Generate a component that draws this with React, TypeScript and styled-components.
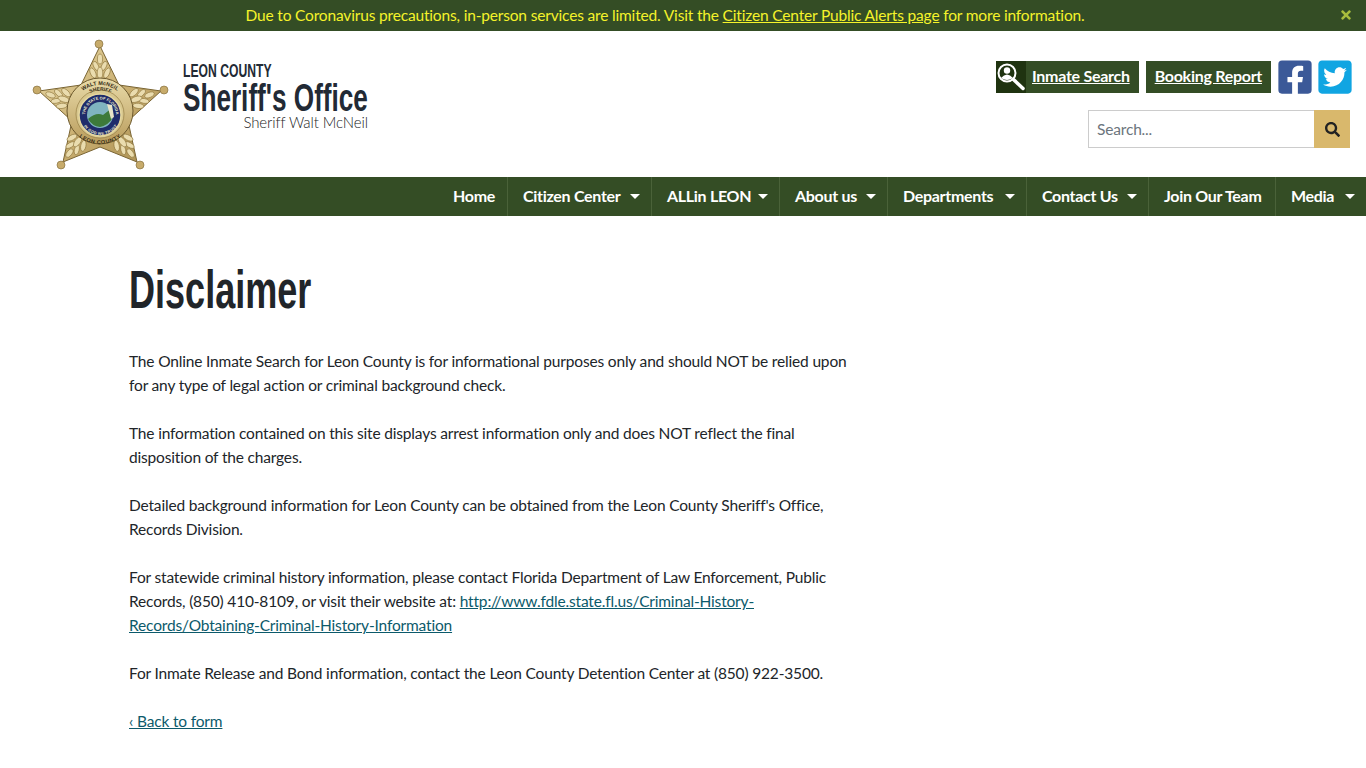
import { createGlobalStyle, styled } from "styled-components";
import { FaFacebookSquare, FaTwitterSquare, FaSearch, FaTimes } from "react-icons/fa";

const Global = createGlobalStyle`
  html, body { margin: 0; padding: 0; background: #fff; }
  body {
    font-family: "Lato", "Liberation Sans", sans-serif;
    color: #212529;
    font-size: 15.5px;
    letter-spacing: -0.17px;
    line-height: 24px;
  }
  * { box-sizing: border-box; }
`;

const AlertBar = styled.div`
  height: 31px;
  padding: 0 36px 2px 0;
  background: #344d25;
  color: #f5f32a;
  display: flex;
  align-items: center;
  justify-content: center;
  position: relative;
  a { color: inherit; }
`;

const AlertClose = styled.span`
  position: absolute;
  right: 13px;
  top: 8px;
  color: #a9bd3d;
  font-size: 14px;
  line-height: 14px;
`;

const Header = styled.header`
  height: 146px;
  display: flex;
  justify-content: space-between;
  padding: 8px 16px 0 31px;
`;

const Brand = styled.div`
  display: flex;
  gap: 14px;
`;

const BrandText = styled.div`
  width: 185px;
  padding-top: 22px;
  display: flex;
  flex-direction: column;
  color: #222a35;
  font-family: "Liberation Sans", sans-serif;
  letter-spacing: 0;
  white-space: nowrap;
`;

const County = styled.div`
  font-size: 19px;
  line-height: 20px;
  font-weight: 700;
  transform: scaleX(0.64);
  transform-origin: left;
`;

const Office = styled.div`
  font-size: 38px;
  line-height: 34px;
  font-weight: 700;
  transform: scaleX(0.688);
  transform-origin: left;
`;

const Sheriff = styled.div`
  font-family: "Lato", sans-serif;
  font-size: 15px;
  line-height: 14px;
  font-weight: 300;
  letter-spacing: -0.1px;
  color: #222;
  text-align: right;
`;

const Tools = styled.div`
  padding-top: 22px;
  display: flex;
  flex-direction: column;
  align-items: flex-end;
  gap: 17px;
`;

const ToolRow = styled.div`
  display: flex;
  gap: 7px;
  align-items: center;
  margin: -1px -1px 0 0;
`;

const ToolButton = styled.a`
  height: 32px;
  background: #344d25;
  color: #fff;
  font-size: 16px;
  font-weight: 700;
  letter-spacing: -0.28px;
  text-decoration: underline;
  display: flex;
  align-items: center;
  padding: 0 9px 1px;
`;

const IconBox = styled.span`
  width: 30px;
  height: 32px;
  margin: 1px 6px 0 -9px;
  background: #1f3310;
  display: flex;
`;

const Social = styled.span<{ $color: string }>`
  width: 33px;
  height: 33px;
  color: ${(p) => p.$color};
  display: flex;
  svg { width: 38px; height: 38px; margin: -2.5px; }
`;

const SearchForm = styled.div`
  display: flex;
  width: 262px;
  height: 38px;
`;

const SearchField = styled.input`
  flex: 1;
  min-width: 0;
  border: 1px solid #ccc;
  border-right: 0;
  padding: 0 8px;
  font: inherit;
  letter-spacing: inherit;
  &::placeholder { color: #6c757d; }
`;

const SearchButton = styled.button`
  width: 36px;
  border: 0;
  padding: 0;
  background: #d9b86c;
  color: #222;
  display: flex;
  align-items: center;
  justify-content: center;
`;

const Nav = styled.nav`
  height: 39px;
  background: #344d25;
  display: flex;
  justify-content: flex-end;
`;

const NavItem = styled.a<{ $w: number; $caret?: boolean }>`
  width: ${(p) => p.$w}px;
  padding: 0 0 2px 15px;
  color: #fff;
  font-size: 16px;
  font-weight: 700;
  letter-spacing: -0.3px;
  display: flex;
  align-items: center;
  border-right: 1px solid #4a6239;
  white-space: nowrap;
  &:last-child { border-right: 0; }
  ${(p) =>
    p.$caret &&
    `&::after {
      content: "";
      margin: 2px 11px 0 auto;
      border-top: 5px solid #fff;
      border-left: 5px solid transparent;
      border-right: 5px solid transparent;
    }`}
`;

const Main = styled.main`
  padding: 44px 0 0 129px;
  width: 855px;
`;

const Title = styled.h1`
  margin: 0 0 29px;
  font-family: "Liberation Sans", sans-serif;
  font-size: 53px;
  line-height: 60px;
  font-weight: 700;
  letter-spacing: 0;
  color: #212529;
  white-space: nowrap;
  transform: scaleX(0.68);
  transform-origin: left;
`;

const Para = styled.p`
  margin: 0 0 24px;
  a { color: #0c5a6b; }
`;

const arms = [0, 72, 144, 216, 288];
// leaf pairs on one arm, drawn pointing up and rotated round the badge centre
const leaves = [
  { y: 58, dx: 0, rx: 2.6, ry: 5 },
  { y: 65, dx: 4, rx: 2.4, ry: 5 },
  { y: 72, dx: 7, rx: 2.6, ry: 5.5 },
  { y: 72, dx: 0, rx: 2.8, ry: 6 },
];

const Badge = () => (
  <svg width="138" height="132" viewBox="30 38 138 132">
    <defs>
      <linearGradient id="gold" x1="0" y1="0" x2="1" y2="1">
        <stop offset="0" stopColor="#e8d8a4" />
        <stop offset="0.55" stopColor="#c9ae70" />
        <stop offset="1" stopColor="#a88d50" />
      </linearGradient>
      <linearGradient id="ring" x1="0" y1="0" x2="0" y2="1">
        <stop offset="0" stopColor="#e9dba9" />
        <stop offset="1" stopColor="#b99c5c" />
      </linearGradient>
      <path id="ringTop" d="M71 112a28 28 0 0 1 56 0" />
      <path id="ringMid" d="M77 112a22.500 22.500 0 0 1 45 0" />
      <path id="ringBottom" d="M68 108a31 31 0 0 0 62 0" />
      <path id="sealTop" d="M84 114a15.500 15.500 0 0 1 31 0" />
      <path id="sealBottom" d="M82 114a17.500 17.500 0 0 0 35 0" />
    </defs>
    <polygon
      points="99,45 118,84 160,90 127,120 136,161 99,146 62,161 71,120 38,90 80,84"
      fill="url(#gold)"
      stroke="#7a6534"
      strokeWidth="1"
    />
    {arms.map((a) => (
      <g key={a} transform={`rotate(${a} 99 110)`} fill="#eadcae" stroke="#8a7238" strokeWidth="0.6">
        {leaves.map((l) =>
          l.dx === 0 ? (
            <ellipse key={`${l.y}c`} cx="99" cy={l.y} rx={l.rx} ry={l.ry} />
          ) : (
            <g key={l.y}>
              <ellipse cx={99 - l.dx} cy={l.y} rx={l.rx} ry={l.ry} transform={`rotate(-25 ${99 - l.dx} ${l.y})`} />
              <ellipse cx={99 + l.dx} cy={l.y} rx={l.rx} ry={l.ry} transform={`rotate(25 ${99 + l.dx} ${l.y})`} />
            </g>
          )
        )}
      </g>
    ))}
    <g fill="#c7ab6b" stroke="#7a6534" strokeWidth="0.6">
      <circle cx="98" cy="43" r="4" />
      <circle cx="163" cy="89" r="4" />
      <circle cx="139" cy="164" r="4" />
      <circle cx="60" cy="164" r="4" />
      <circle cx="36" cy="89" r="4" />
    </g>
    <circle cx="99" cy="110" r="33" fill="url(#ring)" stroke="#6d5a2e" />
    <circle cx="99" cy="113" r="24" fill="#d8c78f" stroke="#8a7238" strokeWidth="0.6" />
    <g fill="#3a3018" fontFamily="Liberation Sans, sans-serif" fontWeight="700" letterSpacing="0">
      <text fontSize="5.500">
        <textPath href="#ringTop" startOffset="50%" textAnchor="middle">WALT McNEIL</textPath>
      </text>
      <text fontSize="5">
        <textPath href="#ringMid" startOffset="50%" textAnchor="middle">SHERIFF</textPath>
      </text>
      <text fontSize="5.500">
        <textPath href="#ringBottom" startOffset="50%" textAnchor="middle" dominantBaseline="hanging">LEON COUNTY</textPath>
      </text>
    </g>
    <circle cx="99" cy="114" r="21" fill="#1f2c6b" stroke="#e5d79f" strokeWidth="1.500" />
    <circle cx="99" cy="114" r="13" fill="#7fb4bf" />
    <path d="M87 118q8-7 15-4l9-7 1 9q-4 8-13 10-8-1-12-8z" fill="#3d7a3a" />
    <path d="M106 103l5 1 2 12-3 2z" fill="#e8e4c8" />
    <g fill="#f2eed0" fontFamily="Liberation Sans, sans-serif" fontWeight="700" letterSpacing="0">
      <text fontSize="4">
        <textPath href="#sealTop" startOffset="50%" textAnchor="middle">THE STATE OF FLORIDA</textPath>
      </text>
      <text fontSize="3.800">
        <textPath href="#sealBottom" startOffset="50%" textAnchor="middle" dominantBaseline="hanging">IN GOD WE TRUST</textPath>
      </text>
    </g>
  </svg>
);

export default function App() {
  return (
    <>
      <Global />
      <AlertBar>
        <span>
          Due to Coronavirus precautions, in-person services are limited. Visit the{" "}
          <a href="#">Citizen Center Public Alerts page</a> for more information.
        </span>
        <AlertClose>
          <FaTimes />
        </AlertClose>
      </AlertBar>
      <Header>
        <Brand>
          <Badge />
          <BrandText>
            <County>LEON COUNTY</County>
            <Office>Sheriff's Office</Office>
            <Sheriff>Sheriff Walt McNeil</Sheriff>
          </BrandText>
        </Brand>
        <Tools>
          <ToolRow>
            <ToolButton href="#">
              <IconBox>
                <svg width="30" height="32" viewBox="0 0 30 32" fill="none" stroke="#fff">
                  <circle cx="11" cy="12" r="8.500" strokeWidth="2" />
                  <circle cx="11" cy="9.500" r="3.200" fill="#fff" stroke="none" />
                  <path d="M5 17q6-7 12 0q-6 4-12 0z" fill="#fff" stroke="none" />
                  <path d="M17.500 18.500l9.500 9" strokeWidth="3.500" strokeLinecap="round" />
                </svg>
              </IconBox>
              Inmate Search
            </ToolButton>
            <ToolButton href="#">Booking Report</ToolButton>
            <Social $color="#3b5998">
              <FaFacebookSquare />
            </Social>
            <Social $color="#10a5e2">
              <FaTwitterSquare />
            </Social>
          </ToolRow>
          <SearchForm>
            <SearchField placeholder="Search..." />
            <SearchButton>
              <FaSearch size={15} />
            </SearchButton>
          </SearchForm>
        </Tools>
      </Header>
      <Nav>
        <NavItem $w={70}>Home</NavItem>
        <NavItem $w={144} $caret>Citizen Center</NavItem>
        <NavItem $w={128} $caret>ALLin LEON</NavItem>
        <NavItem $w={108} $caret>About us</NavItem>
        <NavItem $w={139} $caret>Departments</NavItem>
        <NavItem $w={122} $caret>Contact Us</NavItem>
        <NavItem $w={127}>Join Our Team</NavItem>
        <NavItem $w={90} $caret>Media</NavItem>
      </Nav>
      <Main>
        <Title>Disclaimer</Title>
        <Para>
          The Online Inmate Search for Leon County is for informational purposes only and should NOT be relied upon for
          any type of legal action or criminal background check.
        </Para>
        <Para>
          The information contained on this site displays arrest information only and does NOT reflect the final
          disposition of the charges.
        </Para>
        <Para>
          Detailed background information for Leon County can be obtained from the Leon County Sheriff's Office, Records
          Division.
        </Para>
        <Para>
          For statewide criminal history information, please contact Florida Department of Law Enforcement, Public
          Records, (850) 410-8109, or visit their website at:{" "}
          <a href="#">http://www.fdle.state.fl.us/Criminal-History-Records/Obtaining-Criminal-History-Information</a>
        </Para>
        <Para>For Inmate Release and Bond information, contact the Leon County Detention Center at (850) 922-3500.</Para>
        <Para>
          <a href="#">‹ Back to form</a>
        </Para>
      </Main>
    </>
  );
}
